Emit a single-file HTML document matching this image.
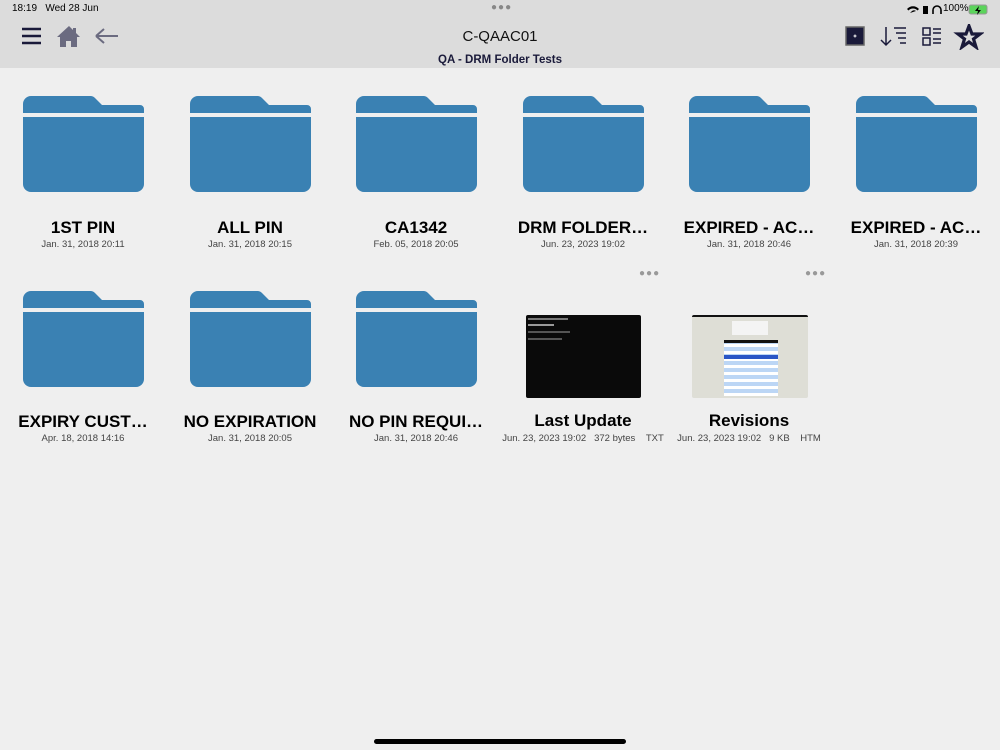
<!DOCTYPE html>
<html><head><meta charset="utf-8"><style>
body{margin:0;width:1000px;height:750px;background:#efefef;font-family:"Liberation Sans",sans-serif;position:relative;overflow:hidden}
.hdr{position:absolute;left:0;top:0;width:1000px;height:68px;background:#dcdcdc}
.abs{position:absolute}
.item{position:absolute;width:166px;text-align:center}
.t{position:absolute;left:0;width:166px;font-weight:bold;font-size:17px;color:#000;white-space:nowrap;text-align:center}
.d{position:absolute;left:0;width:166px;font-size:9.5px;color:#444;white-space:nowrap;text-align:center}
.dots{position:absolute;font-size:10px;color:#999;letter-spacing:1px}
</style></head><body>
<div class="hdr"></div>
<div class="abs" style="left:12px;top:3px;font-size:10px;color:#000">18:19&nbsp;&nbsp;&nbsp;Wed 28 Jun</div>
<div class="abs" style="left:491px;top:2px;font-size:10px;color:#888;letter-spacing:1px">●●●</div>
<div class="abs" style="left:943px;top:3px;font-size:10px;color:#000">100%</div>
<svg class="abs" style="left:906px;top:4px" width="90" height="12"><path d="M4 9 l2 -2 a3 3 0 0 1 4 0 z M1 5 a8 8 0 0 1 12 0 l-1.5 1.5 a6 6 0 0 0 -9 0z" fill="#000"/><rect x="17" y="2" width="5" height="8" fill="#000"/><path d="M27 10 v-4 a4 4 0 0 1 8 0 v4" stroke="#000" stroke-width="1.6" fill="none"/><rect x="63" y="1" width="18" height="9" rx="2" fill="#5bd45b" stroke="#999"/><path d="M73 2 l-4 5 h3 l-1 4 4 -5 h-3z" fill="#000"/></svg>
<svg class="abs" style="left:20px;top:26px" width="100" height="24"><g stroke="#1a1a3a" stroke-width="2.6"><path d="M2 3h19M2 10h19M2 17h19"/></g><path d="M49 0 l-12 11 h3 v10 h6 v-6 h5 v6 h6 v-10 h3 l-4-4 v-5 h-3 v2z" fill="#6b6b80"/><path d="M76 10h22M76 10l8-7M76 10l8 7" stroke="#6b6b80" stroke-width="2" fill="none"/></svg>
<div class="abs" style="left:0;width:1000px;top:28px;text-align:center;font-size:15px;color:#111">C-QAAC01</div>
<div class="abs" style="left:0;width:1000px;top:54px;text-align:center;font-size:11.5px;font-weight:bold;color:#1a1a3a">QA - DRM Folder Tests</div>
<svg class="abs" style="left:844px;top:24px" width="140" height="26"><rect x="2" y="3" width="18" height="18" fill="#1a1a3a" stroke="#666" stroke-width="1.5"/><path d="M9.5 12h3M11 10.5v3" stroke="#fff"/><path d="M42 3v18M37 16l5 5 5-5" stroke="#1a1a3a" stroke-width="1.5" fill="none"/><path d="M50 4h12M52 9h10M54 14h8M56 19h6" stroke="#1a1a3a" stroke-width="1.5"/><rect x="79" y="4" width="7" height="7" fill="none" stroke="#1a1a3a" stroke-width="1.5"/><rect x="79" y="14" width="7" height="7" fill="none" stroke="#1a1a3a" stroke-width="1.5"/><path d="M89 5h8M89 9h8M89 15h8M89 19h8" stroke="#1a1a3a" stroke-width="1.5"/><path d="M125 2 l3 8 h8 l-6.5 5 2.5 8 -7-5 -7 5 2.5-8 -6.5-5 h8z" fill="none" stroke="#1a1a3a" stroke-width="3.2" stroke-linejoin="miter"/></svg>

<svg width="0" height="0" style="position:absolute"><defs><g id="f"><path d="M0 8 a8 8 0 0 1 8 -8 h60 a6 6 0 0 1 4 2 l7 7 h38 a4 4 0 0 1 4 4 v4 h-121z" fill="#3a81b3"/><path d="M0 21 h121 v67 a8 8 0 0 1 -8 8 h-105 a8 8 0 0 1 -8 -8z" fill="#3a81b3"/></g></defs></svg>

<div class="item" style="left:0;top:96px"><svg class="abs" style="left:23px;top:0" width="122" height="97"><use href="#f"/></svg><div class="t" style="top:122px">1ST PIN</div><div class="d" style="top:143px">Jan. 31, 2018 20:11</div></div>
<div class="item" style="left:167px;top:96px"><svg class="abs" style="left:23px;top:0" width="122" height="97"><use href="#f"/></svg><div class="t" style="top:122px">ALL PIN</div><div class="d" style="top:143px">Jan. 31, 2018 20:15</div></div>
<div class="item" style="left:333px;top:96px"><svg class="abs" style="left:23px;top:0" width="122" height="97"><use href="#f"/></svg><div class="t" style="top:122px">CA1342</div><div class="d" style="top:143px">Feb. 05, 2018 20:05</div></div>
<div class="item" style="left:500px;top:96px"><svg class="abs" style="left:23px;top:0" width="122" height="97"><use href="#f"/></svg><div class="t" style="top:122px">DRM FOLDER…</div><div class="d" style="top:143px">Jun. 23, 2023 19:02</div></div>
<div class="item" style="left:666px;top:96px"><svg class="abs" style="left:23px;top:0" width="122" height="97"><use href="#f"/></svg><div class="t" style="top:122px">EXPIRED - AC…</div><div class="d" style="top:143px">Jan. 31, 2018 20:46</div></div>
<div class="item" style="left:833px;top:96px"><svg class="abs" style="left:23px;top:0" width="122" height="97"><use href="#f"/></svg><div class="t" style="top:122px">EXPIRED - AC…</div><div class="d" style="top:143px">Jan. 31, 2018 20:39</div></div>

<div class="item" style="left:0;top:291px"><svg class="abs" style="left:23px;top:0" width="122" height="97"><use href="#f"/></svg><div class="t" style="top:121px">EXPIRY CUST…</div><div class="d" style="top:142px">Apr. 18, 2018 14:16</div></div>
<div class="item" style="left:167px;top:291px"><svg class="abs" style="left:23px;top:0" width="122" height="97"><use href="#f"/></svg><div class="t" style="top:121px">NO EXPIRATION</div><div class="d" style="top:142px">Jan. 31, 2018 20:05</div></div>
<div class="item" style="left:333px;top:291px"><svg class="abs" style="left:23px;top:0" width="122" height="97"><use href="#f"/></svg><div class="t" style="top:121px">NO PIN REQUI…</div><div class="d" style="top:142px">Jan. 31, 2018 20:46</div></div>

<div class="dots" style="left:639px;top:268px">●●●</div>
<div class="dots" style="left:805px;top:268px">●●●</div>
<div class="abs" style="left:526px;top:315px;width:115px;height:83px;background:#0a0a0a;border-radius:2px"><div style="margin:3px 2px;height:2px;width:40px;background:#777"></div><div style="margin:4px 2px;height:2px;width:26px;background:#999"></div><div style="margin:5px 2px;height:2px;width:42px;background:#555"></div><div style="margin:3px 2px;height:2px;width:34px;background:#555"></div></div>
<div class="abs" style="left:692px;top:315px;width:116px;height:83px;background:#deded6;border-radius:2px;overflow:hidden"><div style="height:2px;background:#111"></div><div style="position:absolute;left:32px;top:25px;width:54px;height:56px;background:repeating-linear-gradient(#bcd6f5 0 4px,#fff 4px 7px)"></div><div style="position:absolute;left:32px;top:40px;width:54px;height:4px;background:#2a56c6"></div><div style="position:absolute;left:32px;top:25px;width:54px;height:3px;background:#111"></div><div style="position:absolute;left:40px;top:6px;width:36px;height:14px;background:#f4f4f4"></div></div>
<div class="t" style="left:500px;top:411px">Last Update</div>
<div class="d" style="left:500px;top:433px">Jun. 23, 2023 19:02&nbsp;&nbsp;&nbsp;372 bytes&nbsp;&nbsp;&nbsp;&nbsp;TXT</div>
<div class="t" style="left:666px;top:411px">Revisions</div>
<div class="d" style="left:666px;top:433px">Jun. 23, 2023 19:02&nbsp;&nbsp;&nbsp;9 KB&nbsp;&nbsp;&nbsp;&nbsp;HTM</div>

<div class="abs" style="left:374px;top:739px;width:252px;height:5px;border-radius:3px;background:#000"></div>
</body></html>
